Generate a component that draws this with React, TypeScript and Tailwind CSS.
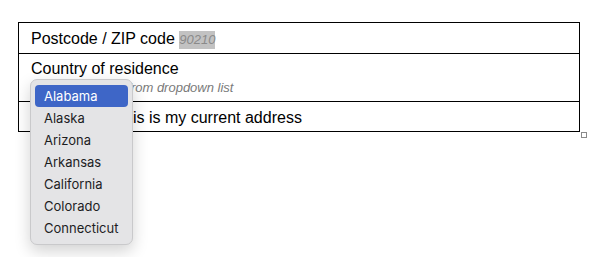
const states = [
  "Alabama",
  "Alaska",
  "Arizona",
  "Arkansas",
  "California",
  "Colorado",
  "Connecticut",
];

function StateMenu() {
  return (
    <div className="absolute left-[30px] top-[79px] w-[103px] rounded-[7px] border border-[#c9c9cb] bg-[#e4e4e6] px-[4px] pt-[5px] pb-[5px] shadow-[0_6px_16px_rgba(0,0,0,0.18)] font-['Inter',sans-serif] text-[13px]">
      {states.map((s, i) => (
        <div
          key={s}
          className={
            i === 0
              ? "rounded-[4px] bg-[#3e66c7] px-[9px] leading-[22px] text-white"
              : "px-[9px] leading-[22px] text-[#1d1d1f]"
          }
        >
          {s}
        </div>
      ))}
    </div>
  );
}

export default function App() {
  return (
    <div className="relative h-[257px] w-[594px] bg-white font-['Liberation_Sans',Arial,sans-serif] text-black">
      <div className="pl-[18px] pt-[22px]">
        <div className="relative w-[562px] border border-black">
          <div className="h-[31px] border-b border-black pl-[12px] pt-[7px] text-[16px] leading-[18px]">
            Postcode / ZIP code{" "}
            <span className="inline-block bg-[#c2c2c2] text-[13px] italic leading-[18px] text-[#8a8a8a]">
              90210
            </span>
          </div>
          <div className="h-[48px] border-b border-black pl-[12px] pt-[6px]">
            <div className="text-[16px] leading-[18px]">Country of residence</div>
            <div className="mt-[2px] text-[13px] italic leading-[15px] text-[#7a7a7a]">
              <span className="tracking-[-0.22px]">Select your state f</span>rom dropdown list
            </div>
          </div>
          <div className="h-[29px] pl-[12px] pt-[7px] text-[16px] leading-[18px]">
            <span className="tracking-[-0.2px]">Confirm that th</span>is is my current address
          </div>
          <div className="absolute -bottom-[7px] -right-[8px] h-[6px] w-[6px] border border-[#8a8a8a] bg-white" />
        </div>
      </div>
      <StateMenu />
    </div>
  );
}
